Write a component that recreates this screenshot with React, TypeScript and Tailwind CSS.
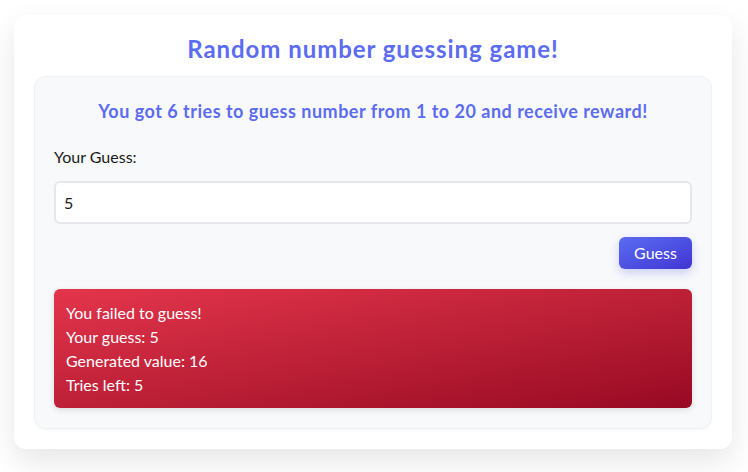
export default function App() {
  const lines = ["You failed to guess!", "Your guess: 5", "Generated value: 16", "Tries left: 5"];

  return (
    <div className="min-h-screen bg-white pl-[14px] pr-4 pt-[15px] pb-6 font-['Lato','Liberation_Sans',sans-serif] text-[#1a1a1a]">
      <div className="rounded-xl bg-white px-5 pt-[18px] pb-5 shadow-[0_12px_30px_rgba(0,0,0,0.10)]">
        <h1 className="text-center text-2xl font-bold tracking-[0.95px] text-[#5c6cf0]">Random number guessing game!</h1>

        <div className="mt-[11px] rounded-xl border border-[#f0f1f4] bg-[#f8f9fb] px-[19px] pt-5 pb-5 shadow-[0_1px_3px_rgba(0,0,0,0.04)]">
          <h2 className="text-center text-lg font-bold tracking-[0.5px] text-[#5c6cf0]">
            You got 6 tries to guess number from 1 to 20 and receive reward!
          </h2>

          <label className="mt-5 block text-base leading-6">Your Guess:</label>
          <input
            type="text"
            defaultValue="5"
            className="mt-3 block h-[43px] w-full rounded-md border-2 border-[#e5e7eb] bg-white px-[8px] text-base outline-none"
          />

          <div className="mt-[13px] flex justify-end">
            <button className="h-8 w-[73px] rounded-md bg-gradient-to-br from-[#5b6cf0] to-[#4232d4] text-base text-white shadow-[0_4px_10px_rgba(70,80,220,0.25)]">
              Guess
            </button>
          </div>

          <div className="mt-5 rounded-md bg-gradient-to-br from-[#e4354c] to-[#980823] px-3 pt-3 pb-[11px] text-base leading-6 text-white shadow-[0_2px_6px_rgba(0,0,0,0.12)]">
            {lines.map((l) => (
              <div key={l}>{l}</div>
            ))}
          </div>
        </div>
      </div>
    </div>
  );
}
